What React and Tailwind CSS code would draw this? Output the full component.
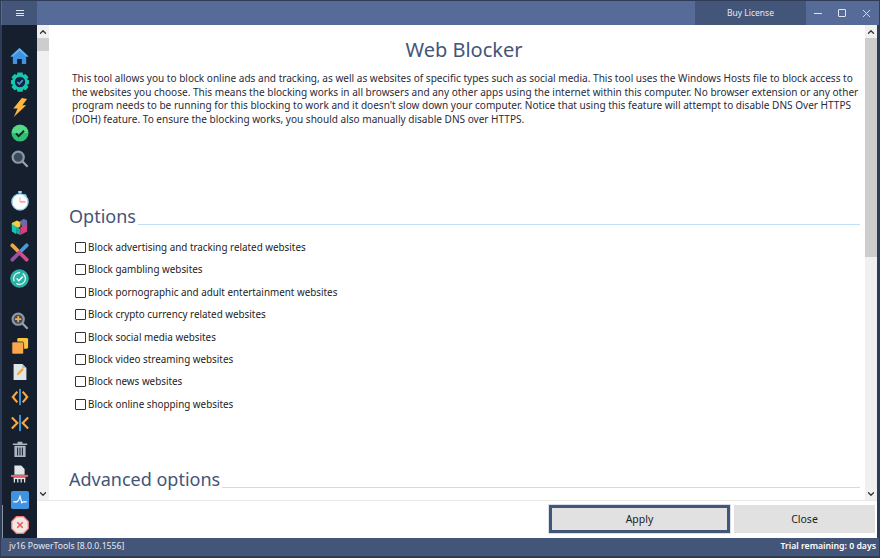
import { FiChevronUp, FiChevronDown } from "react-icons/fi";

const Home = () => (
  <svg viewBox="0 0 20 20" className="w-[19px] h-[19px]">
    <path d="M10 1 L19.500 10 L17 10 L17 18 L12.500 18 L12.500 12.500 L7.500 12.500 L7.500 18 L3 18 L3 10 L0.500 10 Z" fill="#3f93e0" />
    <path d="M10 1 L19.500 10 L17 10 L10 4 L3 10 L0.500 10 Z" fill="#62b2f2" />
  </svg>
);

const Gear = () => (
  <svg viewBox="0 0 20 20" className="w-[20px] h-[20px]">
    <path d="M7.500 0.500h5l.6 2.400 2.400-1 3 3.300-1.500 2 2 1.300v3.200l-2 1.300 1.500 2-3 3.300-2.400-1-.6 2.400h-5l-.6-2.400-2.400 1-3-3.300 1.500-2-2-1.300V8.500l2-1.300-1.500-2 3-3.300 2.400 1z" fill="#12c9ae" />
    <circle cx="10" cy="10" r="5.200" fill="#16233a" />
    <path d="M7.300 10l2 2 3.500-3.800" stroke="#4a90f0" strokeWidth="1.700" fill="none" />
  </svg>
);

const Bolt = () => (
  <svg viewBox="0 0 20 20" className="w-[19px] h-[19px]">
    <path d="M12.500 0 L18 1 L13 7.500 L17 7.500 L4 20 L8 11 L3.500 11 Z" fill="#fdb63f" />
  </svg>
);

const Check = () => (
  <svg viewBox="0 0 20 20" className="w-[18px] h-[18px]">
    <circle cx="10" cy="10" r="9.500" fill="#2fbf71" />
    <path d="M1 10a9 9 0 0 1 18 0z" fill="#57d98a" />
    <path d="M5.500 10.500l3 3 6-6" stroke="#102030" strokeWidth="2" fill="none" />
  </svg>
);

const Search = ({ plus }) => (
  <svg viewBox="0 0 20 20" className="w-[18px] h-[18px]">
    <path d="M12.500 12.500L18.500 18.500" stroke="#9aa5b1" strokeWidth="2.400" />
    <circle cx="8" cy="8" r="6.200" fill="#3b4a5c" stroke="#8d99a6" strokeWidth="2.400" />
    {plus && <path d="M8 4.500v7M4.500 8h7" stroke="#f5ab45" strokeWidth="2" />}
  </svg>
);

const Timer = () => (
  <svg viewBox="0 0 20 22" className="w-[18px] h-[20px]">
    <path d="M8 0h4v2H8zM15.500 3l2 2-1.500 1.500-2-2z" fill="#9fd6f0" />
    <circle cx="10" cy="12" r="9" fill="#fdfdfd" stroke="#8fd0ef" strokeWidth="1.500" />
    <path d="M10 12h6" stroke="#e8786a" strokeWidth="1.200" />
    <path d="M10 7v5" stroke="#e8a49c" strokeWidth="1" />
  </svg>
);

const Cube = () => (
  <svg viewBox="0 0 20 22" className="w-[17px] h-[19px]">
    <path d="M10 5l5-3 4 2v6l-5 3z" fill="#6a6aa8" />
    <path d="M1 7l6-3 4 2v5l-5 3-5-2z" fill="#f4cf3c" />
    <path d="M1 8l5 3v9l-5-3z" fill="#1cc0b6" />
    <path d="M6 11l5 3v7l-5-2z" fill="#18a6a0" />
    <path d="M11 12l8-3v8l-8 4z" fill="#d63f7c" />
  </svg>
);

const Cross = () => (
  <svg viewBox="0 0 20 20" className="w-[19px] h-[19px]">
    <path d="M2.500 2.500L10 10" stroke="#f9a33c" strokeWidth="4" strokeLinecap="round" />
    <path d="M17.500 2.500L10 10" stroke="#3f9de0" strokeWidth="4" strokeLinecap="round" />
    <path d="M2.500 17.500L10 10" stroke="#9a50a8" strokeWidth="4" strokeLinecap="round" />
    <path d="M17.500 17.500L10 10" stroke="#d8468c" strokeWidth="4" strokeLinecap="round" />
  </svg>
);

const Sync = () => (
  <svg viewBox="0 0 20 20" className="w-[19px] h-[19px]">
    <circle cx="10" cy="10" r="9.800" fill="#2bb3a8" />
    <circle cx="10" cy="10" r="6.200" fill="none" stroke="#e6f7f5" strokeWidth="1.300" strokeDasharray="13 3" />
    <path d="M7 10l2.300 2.300L13.500 8" stroke="#fff" strokeWidth="1.500" fill="none" />
  </svg>
);

const Copies = () => (
  <svg viewBox="0 0 20 20" className="w-[18px] h-[18px]">
    <rect x="7" y="1" width="12" height="12" rx="1.500" fill="#f9c440" />
    <rect x="1" y="5.500" width="13" height="13.500" rx="1.500" fill="#fba64a" stroke="#16202e" strokeWidth="0.800" />
  </svg>
);

const Note = () => (
  <svg viewBox="0 0 20 20" className="w-[16px] h-[18px]">
    <path d="M2 0h11l5 5v15H2z" fill="#dfe6ea" />
    <path d="M13 0l5 5h-5z" fill="#aeb9c2" />
    <path d="M6 14l1-3 6-6 2 2-6 6z" fill="#f5a53c" />
  </svg>
);

const Compare = ({ inward }) => (
  <svg viewBox="0 0 20 20" className="w-[18px] h-[18px]">
    <rect x="9" y="1" width="2" height="18" fill="#3f9de0" />
    <path
      d={inward ? "M1 4l6 6-6 6M19 4l-6 6 6 6" : "M7 4l-5 6 5 6M13 4l5 6-5 6"}
      stroke="#f9a83c"
      strokeWidth="2.400"
      fill="none"
    />
  </svg>
);

const Trash = () => (
  <svg viewBox="0 0 20 20" className="w-[16px] h-[18px]">
    <path d="M1 3h18v2H1zM7 1h6v2H7z" fill="#aab6bf" />
    <path d="M3 6h14v14H3z" fill="#aab6bf" />
    <path d="M7 8v10M10 8v10M13 8v10" stroke="#1a2434" strokeWidth="1.300" />
  </svg>
);

const Shredder = () => (
  <svg viewBox="0 0 20 20" className="w-[17px] h-[18px]">
    <path d="M4 0h8l4 4v7H4z" fill="#dfe6ea" />
    <rect x="0" y="11" width="20" height="2.500" fill="#e8636a" />
    <path d="M3 14h14v2H3z" fill="#dfe6ea" />
    <path d="M4 16v4M8 16v4M12 16v4M16 16v4" stroke="#dfe6ea" strokeWidth="1.500" />
  </svg>
);

const Pulse = () => (
  <svg viewBox="0 0 20 20" className="w-[18px] h-[18px]">
    <rect width="20" height="20" rx="2" fill="#3f93e0" />
    <path d="M2.500 12h4l2-2 1.500-4 2 7 1.500-1h4" stroke="#fff" strokeWidth="1.300" fill="none" />
  </svg>
);

const Stop = () => (
  <svg viewBox="0 0 20 20" className="w-[18px] h-[18px]">
    <path d="M6 0.800h8L19.200 6v8L14 19.200H6L0.800 14V6z" fill="#f1e7e4" stroke="#ee7d7d" strokeWidth="1.400" />
    <path d="M7 7l6 6M13 7l-6 6" stroke="#ea5a5a" strokeWidth="1.800" />
  </svg>
);

const topIcons = [Home, Gear, Bolt, Check, Search];
const midIcons = [Timer, Cube, Cross, Sync];

const options = [
  "Block advertising and tracking related websites",
  "Block gambling websites",
  "Block pornographic and adult entertainment websites",
  "Block crypto currency related websites",
  "Block social media websites",
  "Block video streaming websites",
  "Block news websites",
  "Block online shopping websites",
];

const intro = [
  "This tool allows you to block online ads and tracking, as well as websites of specific types such as social media. This tool uses the Windows Hosts file to block access to",
  "the websites you choose. This means the blocking works in all browsers and any other apps using the internet within this computer. No browser extension or any other",
  "program needs to be running for this blocking to work and it doesn't slow down your computer. Notice that using this feature will attempt to disable DNS Over HTTPS",
  "(DOH) feature. To ensure the blocking works, you should also manually disable DNS over HTTPS.",
];

const Slot = ({ children }) => (
  <div className="h-[25.6px] shrink-0 w-full flex items-center justify-center">{children}</div>
);

const SectionTitle = ({ children }) => (
  <div className="flex items-end pl-[20px] pr-[5px]">
    <span className="text-[18px] leading-[26px] text-[#44557a]">{children}</span>
    <div className="flex-1 h-px bg-[#bfe1f8] ml-[2px] mb-[4px]" />
  </div>
);

const Scrollbar = ({ thumb }) => (
  <div className="w-[12px] shrink-0 flex flex-col bg-[#f0f0f0] text-[#333]">
    <div className="h-[13px] flex items-center justify-center">
      <FiChevronUp className="w-[10px] h-[10px]" strokeWidth={3} />
    </div>
    <div className={`${thumb} bg-[#cdcdcd]`} />
    <div className="flex-1" />
    <div className="h-[13px] flex items-center justify-center">
      <FiChevronDown className="w-[10px] h-[10px]" strokeWidth={3} />
    </div>
  </div>
);

export default function App() {
  return (
    <div
      className="w-[880px] h-[558px] flex flex-col bg-[#2f3c57] pt-[1px] pb-[2px] pl-[1px] pr-[3px] text-[#222]"
      style={{ fontFamily: '"Noto Sans", sans-serif' }}
    >
      <div className="h-[24px] flex bg-[#566b98] pl-[1px] -mr-[2px]">
        <div className="w-[35px] flex items-center justify-center bg-[#44557a]">
          <div className="w-[8px] h-[6px] border-y border-[#dfe4ee] flex items-center">
            <div className="w-full h-px bg-[#dfe4ee]" />
          </div>
        </div>
        <div className="flex-1" />
        <div className="w-[111px] flex items-center justify-center bg-[#44557a] text-[8.5px] text-[#e6e9f0]">
          Buy License
        </div>
        <div className="w-[24px] flex items-center justify-center">
          <div className="w-[8px] h-[1px] bg-[#dfe4ee]" />
        </div>
        <div className="w-[24px] flex items-center justify-center">
          <div className="w-[8px] h-[8px] border border-[#dfe4ee] rounded-[1px]" />
        </div>
        <div className="w-[25px] pr-[1px] flex items-center justify-center">
          <svg viewBox="0 0 10 10" className="w-[9px] h-[9px]">
            <path d="M1 1l8 8M9 1l-8 8" stroke="#dfe4ee" strokeWidth="1" />
          </svg>
        </div>
      </div>

      <div className="flex-1 flex min-h-0 pl-[1px]">
        <div className="relative w-[35px] shrink-0 flex flex-col items-center bg-[#161f2e] pt-[18.5px] overflow-hidden">
          {topIcons.map((Icon, i) => (
            <Slot key={i}><Icon /></Slot>
          ))}
          <div className="h-[17px] shrink-0" />
          {midIcons.map((Icon, i) => (
            <Slot key={i}><Icon /></Slot>
          ))}
          <div className="h-[17px] shrink-0" />
          <Slot><Search plus /></Slot>
          <Slot><Copies /></Slot>
          <Slot><Note /></Slot>
          <Slot><Compare /></Slot>
          <Slot><Compare inward /></Slot>
          <Slot><Trash /></Slot>
          <Slot><Shredder /></Slot>
          <Slot><Pulse /></Slot>
          <Slot><Stop /></Slot>
          <div className="absolute left-0 bottom-0 w-px h-[33px] bg-[#8a93a3]" />
        </div>

        <div className="flex-1 flex flex-col min-w-0 bg-white">
          <div className="flex-1 flex min-h-0">
            <Scrollbar thumb="h-[13px]" />
            <div className="flex-1 min-w-0 overflow-hidden flex flex-col">
              <h1 className="mt-[11px] pl-[14px] text-center text-[20px] leading-[28px] text-[#44557a]">Web Blocker</h1>
              <div className="mt-[8px] pl-[23px] text-[10.05px] leading-[13.7px] text-[#2a2a3a]">
                {intro.map((line) => (
                  <div key={line} className="whitespace-nowrap">{line}</div>
                ))}
              </div>
              <div className="mt-[76px]">
                <SectionTitle>Options</SectionTitle>
              </div>
              <div className="mt-[12px] pl-[26px] flex flex-col gap-[9.100px]">
                {options.map((o) => (
                  <label key={o} className="flex items-center h-[13.300px] text-[9.85px] text-[#222]">
                    <span className="w-[11px] h-[11px] border border-[#333] rounded-[1px] bg-white mr-[2px]" />
                    {o}
                  </label>
                ))}
              </div>
              <div className="mt-[55px]">
                <SectionTitle>Advanced options</SectionTitle>
              </div>
            </div>
            <Scrollbar thumb="h-[219px]" />
          </div>
          <div className="h-[38px] shrink-0 flex items-start justify-end border-t border-[#e8e8e8] pt-[4px] pr-[2px] gap-[4px] text-[10.5px]">
            <button className="w-[181px] h-[28px] pt-px bg-[#e1e1e1] border-[3px] border-[#44557a] outline outline-1 outline-[#dbe0e8] text-[#222]">
              Apply
            </button>
            <button className="w-[141px] h-[28px] pt-px bg-[#e1e1e1] text-[#222]">Close</button>
          </div>
        </div>
      </div>

      <div className="h-[18px] flex items-center justify-between bg-[#44557a] pl-[8px] pr-[3px] -mr-[2px] text-[8.7px] text-[#e6e9f0]">
        <span>jv16 PowerTools [8.0.0.1556]</span>
        <span className="font-semibold text-white">Trial remaining: 0 days</span>
      </div>
    </div>
  );
}
